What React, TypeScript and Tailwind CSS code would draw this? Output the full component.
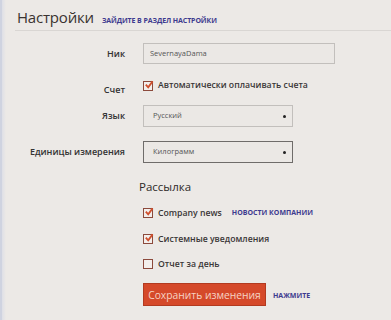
import React from 'react'

function Check({ checked }: { checked: boolean }) {
  return (
    <span className="relative inline-block w-[10px] h-[10px] border border-[#8c4a3c] bg-[#f3efec] shrink-0">
      {checked && (
        <svg className="absolute left-[0px] top-[-2px] w-[10px] h-[10px]" viewBox="0 0 10 10" fill="none">
          <path d="M1.8 4.6 L4.2 7.4 L8.6 1.4" stroke="#d0502e" strokeWidth="1.8" />
        </svg>
      )}
    </span>
  )
}

function SelectBox({ value, dark }: { value: string; dark?: boolean }) {
  return (
    <div
      className={`w-[150px] h-[22px] flex items-center justify-between pl-[9px] pr-[6px] bg-[#ebe8e5] border ${
        dark ? 'border-[#6f6c6a]' : 'border-[#c2bfbc]'
      }`}
    >
      <span className="text-[7.5px] text-[#555]">{value}</span>
      <span className="w-[3px] h-[3px] bg-[#222] rounded-full" />
    </div>
  )
}

export default function App() {
  return (
    <div
      className="w-[391px] h-[320px] bg-[#ece9e6] flex overflow-hidden text-[#333]"
      style={{ fontFamily: '"Open Sans", "Noto Sans", sans-serif' }}
    >
      <div className="w-[2px] bg-[#cfd3e0]" />
      <div className="w-[4px] bg-gradient-to-r from-[#dedfe6] to-[#ece9e6]" />
      <div className="flex-1 flex flex-col">
        <div className="flex items-baseline pl-[11px] pt-[6px] h-[25px]">
          <h1 className="text-[15px] leading-[22px] text-[#3a3330] tracking-[-0.2px]">Настройки</h1>
          <span className="ml-[8px] text-[7px] font-bold text-[#3d3a8f] tracking-[-0.1px]">
            ЗАЙДИТЕ В РАЗДЕЛ НАСТРОЙКИ
          </span>
        </div>
        <div className="ml-[9px] mt-[5px] h-[1px] bg-[#d9d6d3]" />

        <div className="flex items-center mt-[12px] h-[21px]">
          <label className="w-[119px] text-right text-[9px] font-semibold">Ник</label>
          <div className="ml-[18px] w-[192px] h-[21px] border border-[#c2bfbc] bg-[#ebe8e5] flex items-center pl-[6px]">
            <span className="text-[7.5px] text-[#555]">SevernayaDama</span>
          </div>
        </div>

        <div className="flex mt-[16px] h-[20px]">
          <label className="w-[119px] text-right text-[9px] font-semibold pt-[3px]">Счет</label>
          <div className="ml-[18px] flex items-center gap-[5px] h-[12px]">
            <Check checked />
            <span className="text-[8.7px] font-semibold text-[#3a3636]">Автоматически оплачивать счета</span>
          </div>
        </div>

        <div className="flex items-center mt-[5px] h-[22px]">
          <label className="w-[119px] text-right text-[9px] font-semibold">Язык</label>
          <div className="ml-[18px]">
            <SelectBox value="Русский" />
          </div>
        </div>

        <div className="flex items-center mt-[14px] h-[22px]">
          <label className="w-[119px] text-right text-[9px] font-semibold">Единицы измерения</label>
          <div className="ml-[18px]">
            <SelectBox value="Килограмм" dark />
          </div>
        </div>

        <div className="ml-[133px] mt-[15px] text-[11.5px] text-[#2e2a28]">Рассылка</div>

        <div className="ml-[137px] mt-[11px] flex items-center gap-[5px] h-[14px]">
          <Check checked />
          <span className="text-[8.7px] font-semibold text-[#3a3636]">Company news</span>
          <span className="ml-[5px] text-[7px] font-bold text-[#3d3a8f]">НОВОСТИ КОМПАНИИ</span>
        </div>
        <div className="ml-[137px] mt-[12px] flex items-center gap-[5px] h-[14px]">
          <Check checked />
          <span className="text-[8.7px] font-semibold text-[#3a3636]">Системные уведомления</span>
        </div>
        <div className="ml-[137px] mt-[11px] flex items-center gap-[5px] h-[14px]">
          <Check checked={false} />
          <span className="text-[8.7px] font-semibold text-[#3a3636]">Отчет за день</span>
        </div>

        <div className="ml-[137px] mt-[12px] flex items-center">
          <button className="w-[123px] h-[23px] bg-[#d5492a] border border-[#b23a20] text-[10.3px] text-[#f6d3c4] leading-none whitespace-nowrap">
            Сохранить изменения
          </button>
          <span className="ml-[7px] mt-[3px] text-[7px] font-bold text-[#3d3a8f]">НАЖМИТЕ</span>
        </div>
      </div>
    </div>
  )
}
